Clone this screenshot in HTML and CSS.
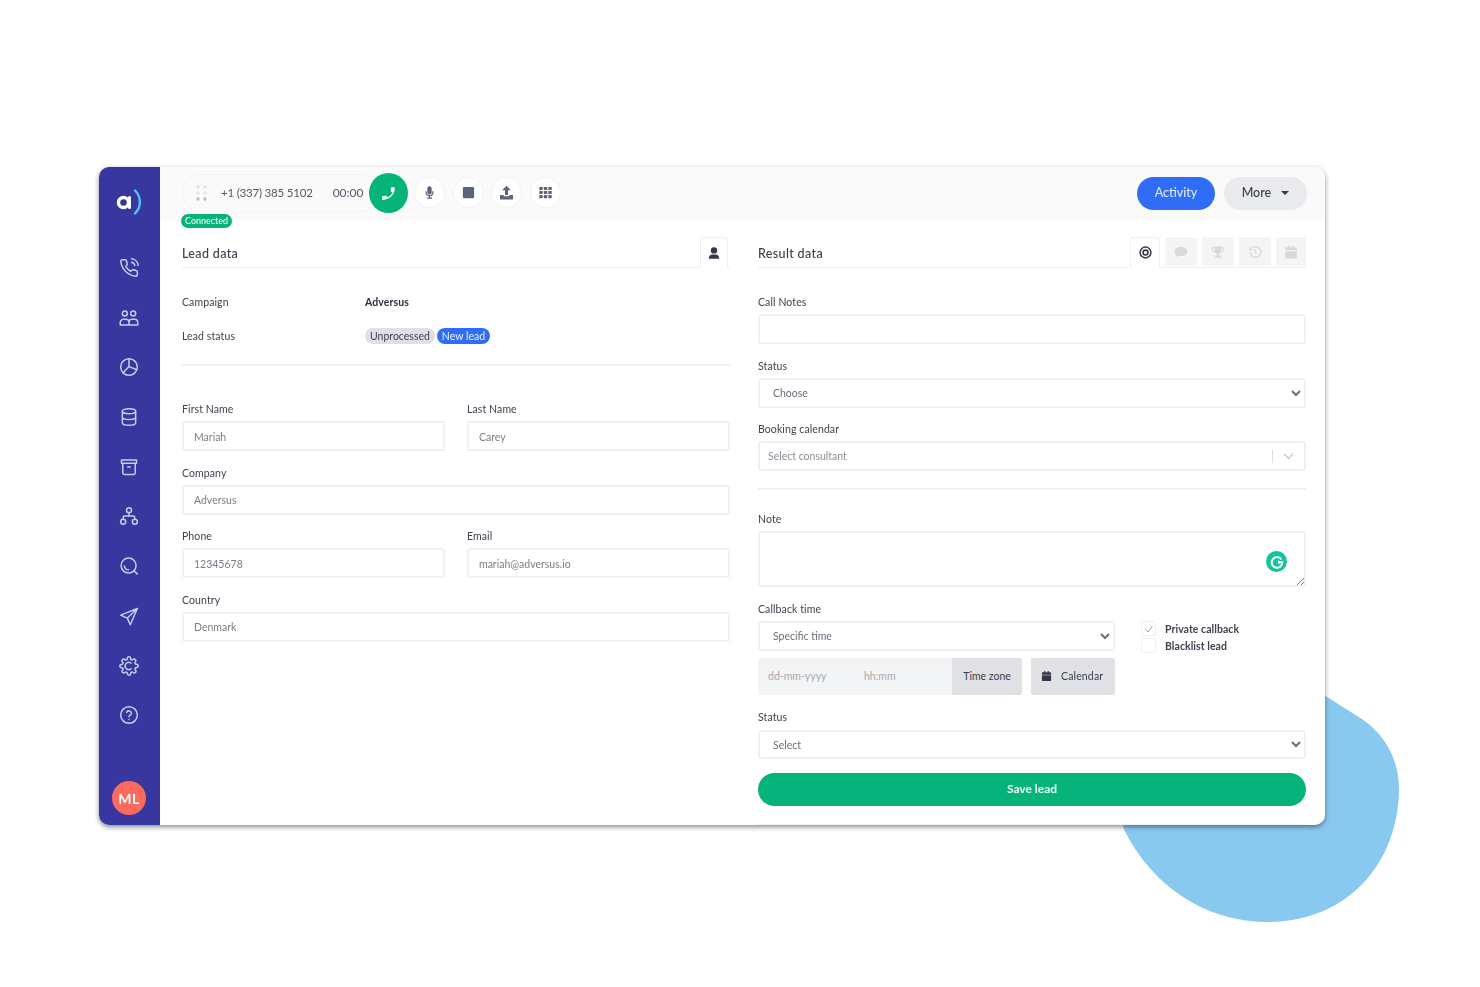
FILE: index.html
```html
<!DOCTYPE html>
<html lang="en">
<head>
<meta charset="utf-8">
<title>Adversus lead</title>
<link rel="stylesheet" href="styles.css">
</head>
<body>
<div class="stage">
  <svg class="blob" viewBox="0 0 300 240" width="300" height="240" aria-hidden="true">
    <path d="M200 -15 L262 24 C285 40 300 65 299 98 C296 172 245 227 167 227 C105 227 50 190 23 132 L100 0 Z" fill="#8ac9ef"/>
  </svg>
  <div class="window">
    <nav class="sidebar">
      <div class="logo"><svg viewBox="0 0 26 26" width="26" height="26"><circle cx="7.500" cy="13.500" r="5" fill="none" stroke="#fff" stroke-width="3.400"/><path d="M13.500 8.500v10" stroke="#fff" stroke-width="3" stroke-linecap="round"/><path d="M19 1.500C25.500 8 25.500 18 19 24.500" fill="none" stroke="#53c4ee" stroke-width="2.400" stroke-linecap="round"/></svg></div>
      <ul class="nav-list">
        <li><svg class="nav-icon" viewBox="0 0 24 24"><path d="M15.05 5A5 5 0 0 1 19 8.95M15.05 1A9 9 0 0 1 23 8.94m-1 7.98v3a2 2 0 0 1-2.18 2 19.79 19.79 0 0 1-8.63-3.07 19.5 19.5 0 0 1-6-6 19.79 19.79 0 0 1-3.07-8.67A2 2 0 0 1 4.11 2h3a2 2 0 0 1 2 1.72 12.84 12.84 0 0 0 .7 2.81 2 2 0 0 1-.45 2.11L8.09 9.91a16 16 0 0 0 6 6l1.27-1.27a2 2 0 0 1 2.11-.45 12.84 12.84 0 0 0 2.81.7A2 2 0 0 1 22 16.92z"/></svg></li>
        <li><svg class="nav-icon" viewBox="0 0 24 24"><circle cx="7" cy="6.500" r="3"/><circle cx="17" cy="6.500" r="3"/><path d="M1.500 20.500v-3a4 4 0 0 1 4-4h3a3.500 3.500 0 0 1 3.500 3.500v3.500zM12 20.500V17a3.500 3.500 0 0 1 3.500-3.500h3a4 4 0 0 1 4 4v3z"/></svg></li>
        <li><svg class="nav-icon" viewBox="0 0 24 24"><circle cx="12" cy="12" r="10"/><path d="M12 2v9.500l8.700 3.500M12 11.500L5 19"/></svg></li>
        <li><svg class="nav-icon" viewBox="0 0 24 24"><ellipse cx="12" cy="5" rx="8" ry="3"/><path d="M4 5v14c0 1.700 3.600 3 8 3s8-1.300 8-3V5M4 12c0 1.700 3.600 3 8 3s8-1.300 8-3"/></svg></li>
        <li><svg class="nav-icon" viewBox="0 0 24 24"><path d="M3 3.500h18v4H3zM4.500 7.500V19a2 2 0 0 0 2 2h11a2 2 0 0 0 2-2V7.500M10.500 12h3"/></svg></li>
        <li><svg class="nav-icon" viewBox="0 0 24 24"><circle cx="12" cy="5" r="3"/><circle cx="5" cy="19" r="3"/><circle cx="19" cy="19" r="3"/><path d="M12 8v4M5 16v-2a2 2 0 0 1 2-2h10a2 2 0 0 1 2 2v2"/></svg></li>
        <li><svg class="nav-icon" viewBox="0 0 24 24"><circle cx="11.500" cy="11.500" r="9"/><path d="M18 18l4 3.500M6.500 12a5 5 0 0 0 5 4.500"/></svg></li>
        <li><svg class="nav-icon" viewBox="0 0 24 24"><path d="M22 3L2 11l8 3.500 3.500 8zM10 14.500L22 3"/></svg></li>
        <li><svg class="nav-icon" viewBox="0 0 24 24"><path d="M14.500 8.700a4.300 4.300 0 1 0 0 6.600"/><path d="M19.400 15a1.650 1.650 0 0 0 .33 1.820l.06.06a2 2 0 1 1-2.830 2.830l-.06-.06a1.650 1.650 0 0 0-2.800 1.170V21a2 2 0 1 1-4 0v-.09A1.650 1.650 0 0 0 9 19.400a1.650 1.650 0 0 0-1.820.33l-.06.06a2 2 0 1 1-2.830-2.830l.06-.06a1.650 1.650 0 0 0-1.170-2.800H3a2 2 0 1 1 0-4h.09A1.650 1.650 0 0 0 4.600 9a1.650 1.650 0 0 0-.33-1.820l-.06-.06a2 2 0 1 1 2.830-2.830l.06.06a1.650 1.650 0 0 0 2.800-1.170V3a2 2 0 1 1 4 0v.09a1.650 1.650 0 0 0 2.800 1.170l.06-.06a2 2 0 1 1 2.830 2.830l-.06.06a1.650 1.650 0 0 0 1.170 2.800H21a2 2 0 1 1 0 4h-.09a1.650 1.650 0 0 0-1.510 1z"/></svg></li>
        <li><svg class="nav-icon" viewBox="0 0 24 24"><circle cx="12" cy="12" r="10"/><path d="M9.100 9a3 3 0 0 1 5.800 1c0 2-3 2.500-3 4M12 17.500v.01"/></svg></li>
      </ul>
      <div class="avatar">ML</div>
    </nav>
    <div class="main">
      <header class="topbar">
        <div class="dialer">
          <svg class="drag" viewBox="0 0 11 16" width="11" height="16"><g fill="#e2e4e8"><circle cx="2" cy="2" r="1.700"/><circle cx="9" cy="2" r="1.700"/><circle cx="2" cy="8" r="1.700"/><circle cx="9" cy="8" r="1.700"/></g><g fill="#b9bcc4"><circle cx="2" cy="14" r="1.700"/><circle cx="9" cy="14" r="1.700"/></g></svg>
          <span class="phone-number">+1 (337) 385 5102</span>
          <span class="timer">00:00</span>
          <button class="call-btn" type="button"><svg viewBox="0 0 24 24" width="17" height="17"><path fill="#fff" transform="matrix(-1 0 0 1 24 0)" d="M6.600 10.800c1.400 2.800 3.800 5.100 6.600 6.600l2.200-2.200c.3-.3.700-.4 1-.2 1.100.4 2.300.6 3.600.6.600 0 1 .4 1 1V20c0 .6-.4 1-1 1C10.600 21 3 13.400 3 4c0-.6.400-1 1-1h3.500c.6 0 1 .4 1 1 0 1.300.2 2.500.6 3.600.1.300 0 .7-.2 1z"/></svg></button>
          <div class="round-group">
            <button class="round-btn" type="button"><svg viewBox="0 0 24 24" width="15" height="15"><path class="slate" d="M12 2a3.500 3.500 0 0 0-3.500 3.500v6a3.500 3.500 0 0 0 7 0v-6A3.500 3.500 0 0 0 12 2zM5.500 10v1.500a6.500 6.500 0 0 0 5.500 6.400V20H8v2h8v-2h-3v-2.100a6.500 6.500 0 0 0 5.500-6.400V10h-2v1.500a4.500 4.500 0 0 1-9 0V10z"/></svg></button>
            <button class="round-btn" type="button"><svg viewBox="0 0 24 24" width="15" height="15"><rect class="slate" x="3" y="3" width="18" height="18" rx="2"/></svg></button>
            <button class="round-btn" type="button"><svg viewBox="0 0 24 24" width="15" height="15"><path class="slate" d="M12 1l7 7.500h-4.500V16h-5V8.500H5zM1.500 16H7.500v2h9v-2h6v6a1 1 0 0 1-1 1h-19a1 1 0 0 1-1-1z"/></svg></button>
            <button class="round-btn" type="button"><svg viewBox="0 0 24 24" width="15" height="15"><g class="slate"><rect x="2" y="3" width="5.500" height="5" rx="1"/><rect x="9.250" y="3" width="5.500" height="5" rx="1"/><rect x="16.500" y="3" width="5.500" height="5" rx="1"/><rect x="2" y="9.500" width="5.500" height="5" rx="1"/><rect x="9.250" y="9.500" width="5.500" height="5" rx="1"/><rect x="16.500" y="9.500" width="5.500" height="5" rx="1"/><rect x="2" y="16" width="5.500" height="5" rx="1"/><rect x="9.250" y="16" width="5.500" height="5" rx="1"/><rect x="16.500" y="16" width="5.500" height="5" rx="1"/></g></svg></button>
          </div>
          <span class="connected">Connected</span>
        </div>
        <div class="top-actions">
          <button class="activity-btn" type="button">Activity</button>
          <button class="more-btn" type="button">More <span class="caret"></span></button>
        </div>
      </header>
      <div class="content">
        <section class="col">
          <div class="section-head">
            <h2>Lead data</h2>
            <div class="tabs">
              <div class="tab active small"><svg viewBox="0 0 24 24" width="14" height="14"><path fill="#33384a" d="M12 2a5.500 5.500 0 1 0 0 11 5.500 5.500 0 0 0 0-11zM3 22C3 17 6 14.500 9 14.500h6c3 0 6 2.500 6 7.500z"/></svg></div>
            </div>
          </div>
          <dl class="meta">
            <dt>Campaign</dt><dd class="strong">Adversus</dd>
            <dt>Lead status</dt><dd class="badges"><span class="badge grey">Unprocessed</span><span class="badge blue">New lead</span></dd>
          </dl>
          <hr class="rule rule-left">
          <div class="form-grid">
            <div class="field"><label>First Name</label><input class="control" value="Mariah"></div>
            <div class="field"><label>Last Name</label><input class="control" value="Carey"></div>
            <div class="field wide"><label>Company</label><input class="control" value="Adversus"></div>
            <div class="field"><label>Phone</label><input class="control" value="12345678"></div>
            <div class="field"><label>Email</label><input class="control" value="mariah@adversus.io"></div>
            <div class="field wide"><label>Country</label><input class="control" value="Denmark"></div>
          </div>
        </section>
        <section class="col">
          <div class="section-head">
            <h2>Result data</h2>
            <div class="tabs">
              <div class="tab active"><svg viewBox="0 0 24 24" width="13" height="13"><circle cx="12" cy="12" r="10" fill="none" stroke="#33384a" stroke-width="2.800"/><circle cx="12" cy="12" r="4.500" fill="none" stroke="#33384a" stroke-width="3"/></svg></div>
              <div class="tab"><svg viewBox="0 0 24 24" width="14" height="14"><path class="ghost" d="M12 3C6 3 1 6.600 1 11c0 2 1 3.700 2.600 5.100C3.200 18 2 19.500 2 20.500c2.500 0 4.600-1 6-2 1.200.3 2.600.5 4 .5 6 0 11-3.600 11-8s-5-8-11-8z"/></svg></div>
              <div class="tab"><svg viewBox="0 0 24 24" width="14" height="14"><path class="ghost" d="M6 2h12v2h5v3c0 3-2.500 5.500-6 6-.8 1.200-2 2-3.500 2.300V18H17v4H7v-4h3.500v-2.700C9 15 7.800 14.200 7 13c-3.500-.5-6-3-6-6V4h5zM3 6v1c0 1.800 1.300 3.300 3.300 3.800C6.100 9.700 6 8 6 6zm18 0h-3c0 2-.1 3.700-.3 4.800C19.700 10.300 21 8.800 21 7z"/></svg></div>
              <div class="tab"><svg viewBox="0 0 24 24" width="14" height="14"><path d="M4 12a9 9 0 1 0 3-6.700M3 3v5h5M12 7v5.500l3.500 2" fill="none" stroke="#d8d9dd" stroke-width="2.400"/></svg></div>
              <div class="tab"><svg viewBox="0 0 24 24" width="14" height="14"><path class="ghost" d="M7 1h2.500v3h5V1H17v3h3a2 2 0 0 1 2 2v3H2V6a2 2 0 0 1 2-2h3zM2 10.500h20V21a2 2 0 0 1-2 2H4a2 2 0 0 1-2-2z"/></svg></div>
            </div>
          </div>
          <div class="field notes-field"><label>Call Notes</label><input class="control"></div>
          <div class="field"><label>Status</label><select class="control select"><option>Choose</option></select></div>
          <div class="field"><label>Booking calendar</label>
            <div class="control combo"><span>Select consultant</span><i class="combo-sep"></i><svg viewBox="0 0 12 8" width="11" height="8"><path d="M1 1.500l5 5 5-5" fill="none" stroke="#cfd0d4" stroke-width="1.700"/></svg></div>
          </div>
          <hr class="rule rule-right">
          <div class="field"><label>Note</label>
            <div class="control note-area"><span class="grammarly"><svg viewBox="0 0 24 24" width="16" height="16"><path d="M18.500 8A8 8 0 1 0 20 12.500h-6" fill="none" stroke="#fff" stroke-width="3"/><path d="M14 9.500l5 3-5 3z" fill="#fff"/></svg></span><svg class="resize" viewBox="0 0 8 8" width="8" height="8"><path d="M1 8L8 1M5 8l3-3" stroke="#777" stroke-width="1"/></svg></div>
          </div>
          <div class="field field-callback"><label>Callback time</label>
            <div class="callback">
              <div class="callback-main">
                <select class="control select"><option>Specific time</option></select>
                <div class="date-row">
                  <div class="date-group"><span class="date-text dd">dd-mm-yyyy</span><span class="date-text">hh:mm</span><span class="tz">Time zone</span></div>
                  <button class="cal-btn" type="button"><svg viewBox="0 0 24 24" width="11" height="12"><path fill="#33384a" d="M7 1h2.500v3h5V1H17v3h3a2 2 0 0 1 2 2v3H2V6a2 2 0 0 1 2-2h3zM2 10.500h20V21a2 2 0 0 1-2 2H4a2 2 0 0 1-2-2z"/></svg>Calendar</button>
                </div>
              </div>
              <div class="checks">
                <div class="check-row"><span class="box"><svg viewBox="0 0 12 12" width="10" height="10"><path d="M2 6.500l3 3 5-7" fill="none" stroke="#8d93a8" stroke-width="1.100"/></svg></span>Private callback</div>
                <div class="check-row"><span class="box"></span>Blacklist lead</div>
              </div>
            </div>
          </div>
          <div class="field field-status"><label>Status</label><select class="control select"><option>Select</option></select></div>
          <button class="save-btn" type="button">Save lead</button>
          <hr class="rule rule-end">
        </section>
      </div>
    </div>
  </div>
</div>
</body>
</html>
```
FILE: styles.css
```css
* { box-sizing: border-box; }
html, body { margin: 0; background: #fff; }
body { font-family: Lato, "Noto Sans", sans-serif; color: #3a3d4a; font-size: 11px; }
.stage { position: relative; width: 1480px; height: 987px; padding: 167px 155px 0 99px; overflow: hidden; }
.blob { position: absolute; left: 1100px; top: 695px; overflow: visible; }
.window { position: relative; display: flex; height: 658px; background: #fff; border-radius: 10px; box-shadow: 0 2px 5px rgba(30,40,60,.55); overflow: hidden; filter: blur(.35px); }

.sidebar { width: 61px; flex: none; background: #37379f; display: flex; flex-direction: column; align-items: center; padding: 20px 1px 10px 0; }
.logo { height: 30px; display: flex; align-items: center; }
.nav-list { list-style: none; margin: 41px 0 0; padding: 0; display: flex; flex-direction: column; gap: 29.700px; }
.nav-list li { height: 20px; }
.nav-icon { display: block; width: 20px; height: 20px; fill: none; stroke: #c9cbe9; stroke-width: 1.800; stroke-linecap: round; stroke-linejoin: round; }
.avatar { margin-top: auto; width: 34px; height: 34px; border-radius: 50%; background: #fb6a5c; color: #fff; font-weight: 700; font-size: 14px; letter-spacing: .5px; display: flex; align-items: center; justify-content: center; }

.main { flex: 1; min-width: 0; display: flex; flex-direction: column; }
.topbar { height: 53px; flex: none; background: #fafafa; display: flex; align-items: center; justify-content: space-between; padding: 0 18px 1px 22px; }
.dialer { position: relative; display: flex; align-items: center; height: 38px; border: 1px solid #f1f2f5; border-radius: 19px; padding-left: 13px; width: 200px; }
.drag { flex: none; }
.phone-number { margin-left: 14px; margin-top: -1px; font-size: 11.500px; letter-spacing: -.2px; color: #555966; white-space: nowrap; }
.timer { margin-left: 20px; font-size: 12px; color: #555966; margin-top: -1px; }
.call-btn { position: absolute; left: 186px; top: -2px; width: 39px; height: 40px; border: 0; border-radius: 50%; background: #06b47b; display: flex; align-items: center; justify-content: center; padding: 0; }
.round-group { position: absolute; left: 231px; top: 2px; display: flex; gap: 7.500px; }
.round-btn { width: 31px; height: 31px; padding: 0; border: 1px solid #f0f2f6; border-radius: 50%; background: #fff; display: flex; align-items: center; justify-content: center; }
.slate { fill: #5b6479; }
.connected { position: absolute; left: -2px; top: 39px; height: 14px; padding: 0 4px; border-radius: 7px; background: #06b47b; color: #fff; font-size: 9px; line-height: 14px; }
.top-actions { display: flex; gap: 9px; }
.activity-btn, .more-btn { height: 33px; border: 0; border-radius: 17px; font: 500 12.500px Lato, sans-serif; padding: 0 0 2px; }
.activity-btn { width: 78px; background: #2f6df6; color: #dfe9ff; }
.more-btn { width: 83px; background: #e9eaee; color: #3a3d4a; }
.caret { display: inline-block; margin-left: 7px; vertical-align: 2px; border: 4px solid transparent; border-top-color: #33384a; border-bottom: 0; }

.content { flex: 1; display: grid; grid-template-columns: 548px 548px; gap: 28px; padding: 0 19px 0 22px; }
.section-head { height: 49px; margin-top: -1px; padding-top: 19px; border-bottom: 1px solid #eeeff1; display: flex; align-items: flex-end; justify-content: space-between; }
.section-head h2 { margin: 0 0 6px; font-size: 12.500px; font-weight: 500; letter-spacing: .35px; color: #3a3d4a; }
.tabs { display: flex; gap: 5px; margin-bottom: -1px; }
.tab { width: 32px; height: 29px; background: #f5f5f6; border-radius: 3px 3px 0 0; display: flex; align-items: center; justify-content: center; }
.tab:last-child:not(.small) { width: 30px; }
.tab.active { width: 30px; height: 31px; background: #fff; border: 1px solid #eeeff1; border-bottom-color: #fff; }
.tab.small { width: 28px; margin-right: 2px; }
.ghost { fill: #d8d9dd; }

.meta { display: grid; grid-template-columns: 183px 1fr; margin: 0; padding-top: 27px; row-gap: 19px; align-items: center; }
.meta dt, .meta dd { margin: 0; height: 15px; line-height: 15px; font-size: 10.500px; letter-spacing: .1px; color: #3f4250; }
.meta .strong { font-weight: 700; color: #2e3142; }
.meta .badges { display: flex; gap: 2px; margin-top: -1px; letter-spacing: 0; height: 16px; }
.badge { height: 16px; padding: 0 5px; border-radius: 8px; font-size: 10.500px; line-height: 16px; letter-spacing: 0; }
.badge.grey { background: #dfe0e4; color: #3f4250; }
.badge.blue { background: #2f6df6; color: #e8efff; }
.rule { border: 0; height: 2px; background: #f0f1f3; margin: 0; }
.rule-left { margin: 20px 0 36px; }
.rule-right { margin: 2.500px 0 22px; }
.rule-end { height: 1px; margin-top: 18px; }

.form-grid { display: grid; grid-template-columns: 263px 263px; column-gap: 22px; }
.wide { grid-column: 1 / -1; }
.field { padding-bottom: 14.500px; }
.field label { display: block; height: 14px; line-height: 14px; margin-bottom: 5px; font-size: 10.500px; letter-spacing: .1px; color: #3f4250; }
.notes-field { margin-top: 27px; }
.field-callback { padding-bottom: 15px; }
.field-status { padding-bottom: 14.500px; }
.field-status label { margin-bottom: 6px; }
.field-status .control { height: 29px; }
.control { display: block; width: 100%; height: 30px; padding: 1px 10px 0; background: #fff; border: 2px solid #f0f1f3; border-radius: 3px; font: 10.500px Lato, sans-serif; color: #7b7e88; outline: 0; }
.select { color: #6b6e79; padding: 1px 9px 0; }
.combo { display: flex; align-items: center; padding: 0 10px 0 8px; color: #8b8e97; }
.combo span { flex: 1; }
.combo-sep { width: 1px; height: 13px; background: #dcdde0; margin-right: 10px; }
.note-area { position: relative; height: 55.500px; margin-bottom: .5px; }
.grammarly { position: absolute; right: 17px; top: 18px; width: 21px; height: 21px; border-radius: 50%; background: #15c39a; display: flex; align-items: center; justify-content: center; }
.resize { position: absolute; right: 0; bottom: 0; }
.callback { display: flex; gap: 26px; }
.callback-main { width: 357px; flex: none; }
.date-row { display: flex; gap: 9px; margin-top: 7px; }
.date-group { flex: 1; height: 37px; background: #f3f4f6; border-radius: 2px; display: flex; align-items: center; padding-left: 10px; position: relative; font-size: 10.500px; color: #a6a8b0; }
.date-text.dd { width: 96px; }
.tz { position: absolute; right: 0; top: 0; width: 70px; height: 37px; background: #e0e1e5; border-radius: 0 2px 2px 0; color: #3a3d4a; line-height: 37px; text-align: center; }
.cal-btn { width: 84px; height: 37px; border: 0; border-radius: 2px; background: #e0e1e5; color: #3a3d4a; font: 10.500px Lato, sans-serif; letter-spacing: .15px; display: flex; align-items: center; gap: 9px; padding: 0 0 1px 10px; }
.checks { display: flex; flex-direction: column; gap: 2px; padding-top: .5px; }
.check-row { display: flex; align-items: center; gap: 9px; height: 15px; font-size: 10.500px; letter-spacing: .05px; font-weight: 700; color: #3f4250; }
.box { width: 15px; height: 15px; border: 1.500px solid #eff0f3; border-radius: 2px; display: flex; align-items: center; justify-content: center; }
.save-btn { display: block; width: 100%; height: 33px; border: 0; border-radius: 17px; padding: 0 0 2px; background: #06b47b; color: #e8fff6; font: 700 12px Lato, sans-serif; }
```
